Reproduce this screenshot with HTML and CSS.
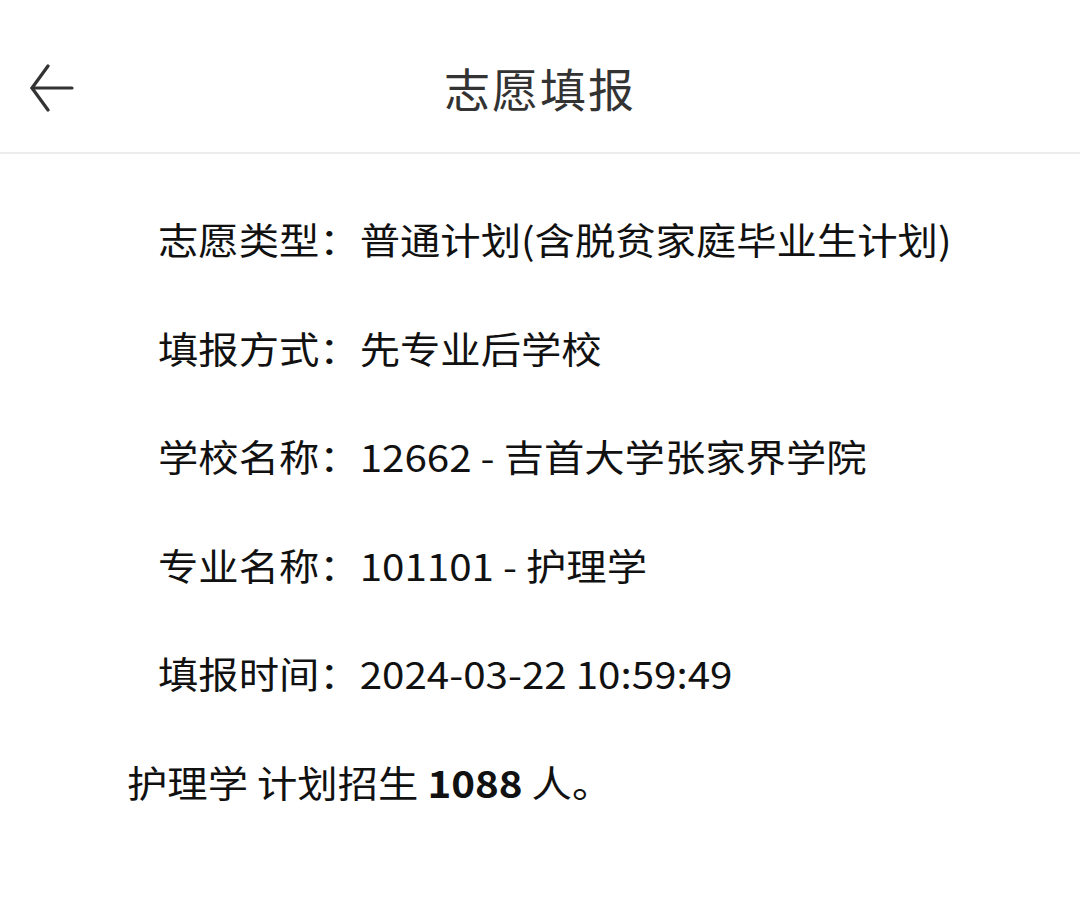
FILE: index.html
```html
<!DOCTYPE html>
<html lang="zh">
<head>
<meta charset="utf-8">
<link rel="stylesheet" href="styles.css">
</head>
<body>
<div class="header">
  <div class="back">
    <svg width="48" height="48" viewBox="0 0 48 48" fill="none" stroke="#333" stroke-width="3.2" stroke-linecap="round" stroke-linejoin="round">
      <path d="M44 24H4"/>
      <path d="M20 2L4 24L20 46"/>
    </svg>
  </div>
  <div class="title">志愿填报</div>
</div>
<div class="content">
  <div class="row"><span class="txt">志愿类型：普通计划(含脱贫家庭毕业生计划)</span></div>
  <div class="row"><span class="txt">填报方式：先专业后学校</span></div>
  <div class="row"><span class="txt">学校名称：12662 - 吉首大学张家界学院</span></div>
  <div class="row"><span class="txt">专业名称：101101 - 护理学</span></div>
  <div class="row"><span class="txt">填报时间：2024-03-22 10:59:49</span></div>
  <div class="note"><span class="txt">护理学 计划招生 <b>1088</b> 人。</span></div>
</div>
</body>
</html>
```

FILE: styles.css
```css
html, body {
  margin: 0;
  padding: 0;
  background: #ffffff;
  font-family: "Noto Sans CJK SC", "Noto Sans", sans-serif;
}
.header {
  position: relative;
  height: 154px;
  box-sizing: border-box;
  border-bottom: 2px solid #ececec;
  display: flex;
  justify-content: center;
  align-items: flex-start;
  padding-top: 61px;
}
.back {
  position: absolute;
  left: 28px;
  top: 64px;
  width: 48px;
  height: 48px;
}
.back svg { display: block; }
.title {
  font-size: 46px;
  color: #333333;
  letter-spacing: 2px;
  line-height: 52px;
}
.content {
  padding: 31px 0 0 127px;
  display: flex;
  flex-direction: column;
}
.row {
  padding-left: 31px;
  height: 108.5px;
  line-height: 108.5px;
  font-size: 37px;
  color: #111111;
  white-space: nowrap;
}
.note {
  height: 108.5px;
  line-height: 108.5px;
  font-size: 37px;
  color: #111111;
  white-space: nowrap;
}
.txt {
  display: inline-block;
  transform: scaleX(1.09);
  transform-origin: left center;
}
.note b { font-weight: 700; }
```
